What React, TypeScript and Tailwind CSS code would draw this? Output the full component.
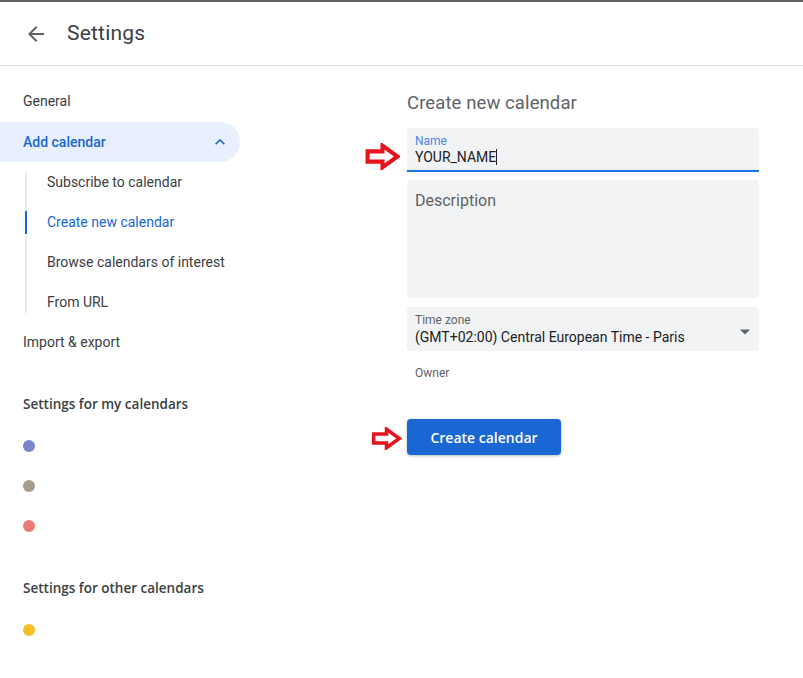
import React from "react";

const RedArrow = ({ w, h }: { w: number; h: number }) => (
  <svg width={w} height={h} viewBox="0 0 34 26">
    <polygon
      points="2.5,8 17,8 17,2.5 31.5,13 17,23.5 17,18 2.5,18"
      fill="white"
      stroke="#e5141d"
      strokeWidth="4"
      strokeLinejoin="miter"
    />
  </svg>
);

export default function App() {
  return (
    <div
      className="relative w-[803px] h-[678px] bg-white overflow-hidden text-[#3c4043]"
      style={{ fontFamily: "Roboto, 'Liberation Sans', sans-serif" }}
    >
      <div className="h-[66px] border-t-2 border-[#5f6368] border-b border-b-[#dadce0] flex items-center">
        <div className="w-[48px] ml-[12px] flex items-center justify-center">
          <svg width="24" height="24" viewBox="0 0 24 24" fill="#5f6368">
            <path d="M20 11H7.83l5.59-5.59L12 4l-8 8 8 8 1.41-1.41L7.83 13H20v-2z" />
          </svg>
        </div>
        <div className="ml-[7px] text-[21px] text-[#3c4043] tracking-[0.2px]">Settings</div>
      </div>

      <div className="flex">
        <div className="w-[240px] pt-[15px] text-[14px]">
          <div className="h-[40px] flex items-center pl-[23px]">General</div>
          <div className="mt-[1px] h-[40px] flex items-center pl-[23px] pr-[10px] bg-[#e8f0fe] rounded-r-full text-[#1967d2] font-medium justify-between">
            <span>Add calendar</span>
            <svg width="20" height="20" viewBox="0 0 24 24" fill="#1967d2">
              <path d="M7.41 15.41 12 10.83l4.59 4.58L18 14l-6-6-6 6z" />
            </svg>
          </div>
          <div className="relative">
            <div className="absolute left-[25px] top-[11px] bottom-[9px] w-[2px] bg-[#e8eaed]" />
            <div className="h-[40px] flex items-center pl-[47px]">Subscribe to calendar</div>
            <div className="relative h-[40px] flex items-center pl-[47px] text-[#1967d2]">
              <div className="absolute left-[25px] top-[9px] h-[23px] w-[2px] bg-[#1967d2]" />
              Create new calendar
            </div>
            <div className="h-[40px] flex items-center pl-[47px]">Browse calendars of interest</div>
            <div className="h-[40px] flex items-center pl-[47px]">From URL</div>
          </div>
          <div className="h-[40px] flex items-center pl-[23px]">Import &amp; export</div>
          <div
            className="h-[40px] flex items-center pl-[23px] pb-[3px] mt-[24px] font-semibold text-[13.5px] text-[#3c4043]"
            style={{ fontFamily: "'Open Sans', Roboto, sans-serif" }}
          >
            Settings for my calendars
          </div>
          <div className="h-[40px] flex items-center pl-[23px]"><div className="w-[12px] h-[12px] rounded-full bg-[#7986cb]" /></div>
          <div className="h-[40px] flex items-center pl-[23px]"><div className="w-[12px] h-[12px] rounded-full bg-[#a79b8e]" /></div>
          <div className="h-[40px] flex items-center pl-[23px]"><div className="w-[12px] h-[12px] rounded-full bg-[#e67c73]" /></div>
          <div
            className="h-[40px] flex items-center pl-[23px] pb-[3px] mt-[24px] font-semibold text-[13.5px] text-[#3c4043]"
            style={{ fontFamily: "'Open Sans', Roboto, sans-serif" }}
          >
            Settings for other calendars
          </div>
          <div className="h-[40px] flex items-center pl-[23px]"><div className="w-[12px] h-[12px] rounded-full bg-[#f6bf26]" /></div>
        </div>

        <div className="ml-[167px] w-[352px] pt-[25px]">
          <div className="text-[18.5px] text-[#5f6368] h-[24px] leading-[24px] tracking-[0.1px]">Create new calendar</div>
          <div className="mt-[13px] h-[44px] bg-[#f1f3f4] rounded-t-[4px] border-b-2 border-[#1a73e8] px-[8px] pt-[6px]">
            <div className="text-[12px] leading-[14px] text-[#4f83e8]">Name</div>
            <div className="text-[14px] leading-[18px] text-[#202124] flex items-center">
              YOUR_NAME<span className="inline-block w-[1px] h-[16px] bg-[#202124]" />
            </div>
          </div>
          <div className="mt-[8px] h-[118px] bg-[#f1f3f4] rounded-[4px] px-[8px] pt-[9px] text-[16px] text-[#5f6368]">
            Description
          </div>
          <div className="mt-[9px] h-[44px] bg-[#f1f3f4] rounded-[4px] px-[8px] pt-[6px] flex justify-between">
            <div>
              <div className="text-[12px] leading-[14px] text-[#5f6368]">Time zone</div>
              <div className="text-[14px] leading-[20px] text-[#202124]">(GMT+02:00) Central European Time - Paris</div>
            </div>
            <svg width="10" height="6" viewBox="0 0 10 5" className="mt-[16px] mr-[1px]">
              <path d="M0 0l5 5 5-5z" fill="#5f6368" />
            </svg>
          </div>
          <div className="mt-[14px] h-[12px] overflow-hidden px-[8px]">
            <div className="text-[12px] leading-[16px] text-[#5f6368]">Owner</div>
          </div>
          <div className="mt-[42px]">
            <button
              className="h-[36px] w-[154px] bg-[#1967d2] rounded-[4px] text-white text-[14px] font-semibold shadow-[0_1px_3px_rgba(60,64,67,0.35)]"
              style={{ fontFamily: "'Open Sans', Roboto, sans-serif" }}
            >
              Create calendar
            </button>
          </div>
        </div>
      </div>

      <div className="absolute left-[365px] top-[143px]"><RedArrow w={35} h={27} /></div>
      <div className="absolute left-[371px] top-[427px]"><RedArrow w={31} h={23} /></div>
    </div>
  );
}
